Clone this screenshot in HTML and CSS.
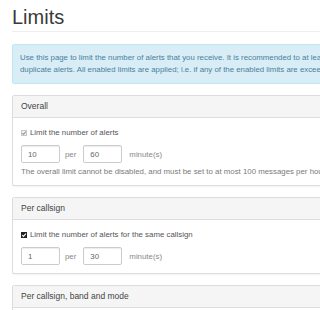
FILE: index.html
```html
<!DOCTYPE html>
<html>
<head>
<meta charset="utf-8">
<link rel="stylesheet" href="styles.css">
</head>
<body>
<div class="page">
  <div class="page-header"><h1>Limits</h1></div>
  <div class="alert">
    <div class="line">Use this page to limit the number of alerts that you receive. It is recommended to at least limit the number of</div>
    <div class="line">duplicate alerts. All enabled limits are applied; i.e. if any of the enabled limits are exceeded, the alert will not be sent.</div>
  </div>

  <div class="panel">
    <div class="panel-heading">Overall</div>
    <div class="panel-body">
      <label class="checkbox">
        <span class="box box-disabled"><svg viewBox="0 0 6 6" width="6" height="6"><path d="M1.2 3.1 L2.5 4.4 L4.9 1.6" fill="none" stroke="#9a9a9a" stroke-width="1.1"/></svg></span>
        <span>Limit the number of alerts</span>
      </label>
      <div class="rate-row">
        <input class="num" type="text" value="10">
        <span class="per">per</span>
        <input class="num" type="text" value="60">
        <span class="unit">minute(s)</span>
      </div>
      <p class="help">The overall limit cannot be disabled, and must be set to at most 100 messages per hour.</p>
    </div>
  </div>

  <div class="panel">
    <div class="panel-heading">Per callsign</div>
    <div class="panel-body">
      <label class="checkbox">
        <span class="box box-checked"><svg viewBox="0 0 6 6" width="6" height="6"><path d="M1.2 3.1 L2.5 4.4 L4.9 1.6" fill="none" stroke="#fff" stroke-width="1.1"/></svg></span>
        <span>Limit the number of alerts for the same callsign</span>
      </label>
      <div class="rate-row">
        <input class="num" type="text" value="1">
        <span class="per">per</span>
        <input class="num" type="text" value="30">
        <span class="unit">minute(s)</span>
      </div>
    </div>
  </div>

  <div class="panel">
    <div class="panel-heading">Per callsign, band and mode</div>
    <div class="panel-body">
      <label class="checkbox">
        <span class="box box-checked"><svg viewBox="0 0 6 6" width="6" height="6"><path d="M1.2 3.1 L2.5 4.4 L4.9 1.6" fill="none" stroke="#fff" stroke-width="1.1"/></svg></span>
        <span>Limit the number of alerts for the same callsign, band and mode</span>
      </label>
    </div>
  </div>
</div>
</body>
</html>
```

FILE: styles.css
```css
html, body {
  margin: 0;
  padding: 0;
  background: #fff;
  overflow: hidden;
}

body {
  font-family: "Liberation Sans", Arial, sans-serif;
  font-size: 7.85px;
  color: #444;
  width: 320px;
  height: 310px;
}

.page {
  width: 640px;
  padding: 0 12px;
}

.page-header {
  padding-top: 5px;
  padding-bottom: 2px;
  border-bottom: 1px solid #eee;
}

.page-header h1 {
  margin: 0;
  font-size: 20px;
  line-height: 24px;
  font-weight: normal;
  color: #3a3a3a;
}

.alert {
  margin-top: 12px;
  padding: 7px 7px;
  background: #d9edf7;
  border: 1px solid #bce8f1;
  border-radius: 2px;
  color: #4a7f9c;
  line-height: 12px;
}

.alert .line {
  white-space: nowrap;
}

.panel {
  margin-top: 11px;
  border: 1px solid #ddd;
  border-radius: 2px;
  background: #fff;
  box-shadow: 0 1px 1px rgba(0, 0, 0, 0.05);
}

.panel-heading {
  padding: 5px 8px;
  font-size: 8.5px;
  line-height: 11px;
  background: #f5f5f5;
  border-bottom: 1px solid #ddd;
  color: #444;
}

.panel-body {
  padding: 8px 8px;
}

.checkbox {
  display: flex;
  align-items: center;
  margin: 1px 0 7px;
  line-height: 11px;
  white-space: nowrap;
  color: #555;
}

.box {
  box-sizing: border-box;
  display: flex;
  width: 6px;
  height: 6px;
  margin-right: 3px;
}

.box svg {
  display: block;
}

.box-disabled {
  background: #f2f2f2;
  outline: 1px solid #c8c8c8;
  outline-offset: -1px;
}

.box-checked {
  background: #222;
}

.rate-row {
  display: flex;
  align-items: center;
  height: 18px;
  color: #888;
}

.num {
  box-sizing: border-box;
  width: 39px;
  height: 18px;
  margin: 0;
  padding: 0 6px;
  border: 1px solid #ccc;
  border-radius: 2px;
  font: inherit;
  color: #666;
  background: #fff;
  box-shadow: inset 0 1px 1px rgba(0, 0, 0, 0.075);
}

.per {
  margin: 0 7px 0 5px;
}

.unit {
  margin-left: 7px;
}

.help {
  margin: 3px 0 0;
  line-height: 11px;
  color: #7a7a7a;
  white-space: nowrap;
}
```
